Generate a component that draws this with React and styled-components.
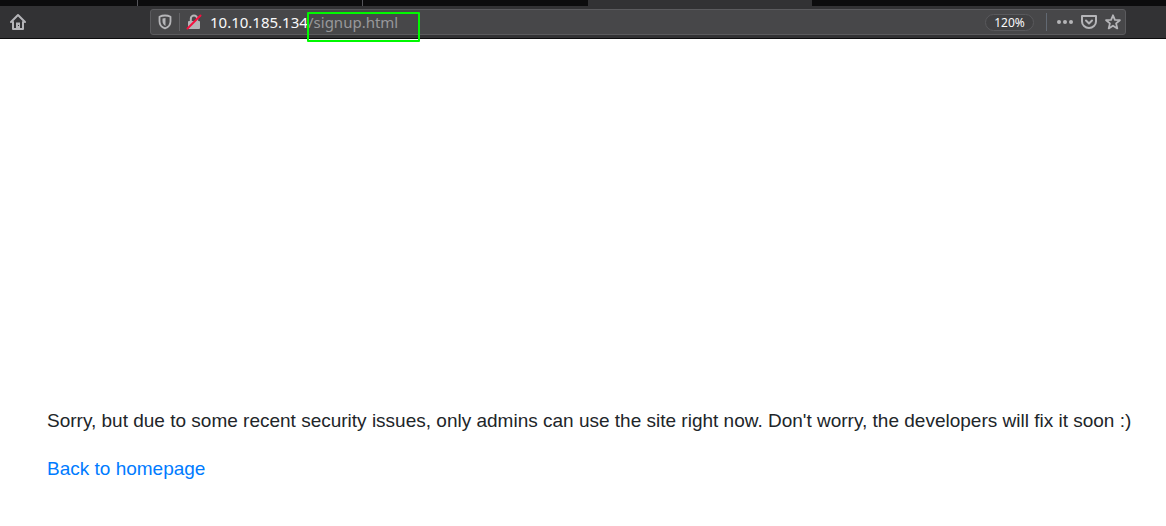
import React from "react";
import styled, { createGlobalStyle } from "styled-components";

const GlobalStyle = createGlobalStyle`
  * { box-sizing: border-box; }
  body { margin: 0; background: #fff; }
`;

const Chrome = styled.header`
  background: #323234;
  border-bottom: 1px solid #0c0c0d;
  font-family: "Noto Sans", "Open Sans", sans-serif;
`;

const TabStrip = styled.div`
  display: flex;
  height: 6px;
  background: #0c0c0d;
`;

const Tab = styled.div`
  flex: none;
  width: ${({ $cut }) => ($cut ? 138 : 225)}px;
  background: ${({ $active }) => ($active ? "#323234" : "#0c0c0d")};
  border-right: 1px solid ${({ $line }) => ($line ? "#55555a" : "#0c0c0d")};
`;

const Toolbar = styled.div`
  display: flex;
  align-items: center;
  height: 32px;
  padding: 0 40px 0 8px;
`;

const IconButton = styled.button`
  flex: none;
  display: flex;
  align-items: center;
  justify-content: center;
  width: 20px;
  height: 20px;
  padding: 0;
  border: 0;
  background: none;
  color: #b5b5b8;
`;

const AddressBar = styled.form`
  flex: 1;
  min-width: 0;
  display: flex;
  align-items: center;
  height: 26px;
  margin-left: 122px;
  padding: 0 2px 0 4px;
  background: #474749;
  border: 1px solid #5b5b5e;
  border-radius: 3px;
`;

const Divider = styled.span`
  flex: none;
  width: 1px;
  height: 18px;
  margin: 0 4px;
  background: ${({ $cool }) => ($cool ? "#626973" : "#626265")};
`;

const Host = styled.label`
  flex: none;
  width: 98px;
  margin-left: 6px;
  color: #f9f9fa;
  font-size: 15px;
  line-height: 20px;
  white-space: nowrap;
`;

const PathField = styled.div`
  position: relative;
  flex: none;
  width: 112px;
  height: 20px;
`;

const PathInput = styled.input`
  display: block;
  width: 100%;
  height: 20px;
  padding: 0;
  border: 0;
  outline: 0;
  background: none;
  color: #98989b;
  font-family: inherit;
  font-size: 15px;
  line-height: 20px;
`;

const Highlight = styled.div`
  position: absolute;
  inset: 0 0 -10px -1px;
  border: 2px solid #00f800;
  border-radius: 1px;
  pointer-events: none;
`;

const Spacer = styled.span`
  flex: 1;
`;

const ZoomButton = styled.button`
  flex: none;
  width: 49px;
  height: 17px;
  padding: 0;
  margin-right: 8px;
  border: 1px solid #59595c;
  border-radius: 9px;
  background: #414143;
  color: #f9f9fa;
  font-family: inherit;
  font-size: 12px;
  line-height: 15px;
`;

const Actions = styled.div`
  flex: none;
  display: flex;
  gap: 4px;
  margin-left: 4px;
`;

const Content = styled.main`
  padding: 368px 20px 32px 47px;
  color: #212529;
  font-family: "Liberation Sans", Arial, sans-serif;
  font-size: 19px;
  line-height: 28px;
`;

const Message = styled.p`
  margin: 0 0 20px;
`;

const HomeLink = styled.a`
  color: #007bff;
  text-decoration: none;
`;

const HomeIcon = () => (
  <svg width="18" height="18" viewBox="0 0 18 18" fill="none" stroke="currentColor" strokeWidth="2" strokeLinejoin="round" strokeLinecap="round">
    <path d="M2 9 9 2l7 7" />
    <path d="M4 9v7h10V9" />
    <path d="M7 15V9.500h4V15z" fill="currentColor" stroke="none" />
    <path d="M9.500 12v1" stroke="#323234" strokeWidth="1" strokeLinecap="butt" />
  </svg>
);

const ShieldIcon = () => (
  <svg width="14" height="16" viewBox="0 0 14 16">
    <path d="M7 1.500C9 1.500 11 2 12.500 2.800v4.400c0 3.700-2 6-5.500 7.200-3.500-1.200-5.500-3.500-5.500-7.200V2.800C3 2 5 1.500 7 1.500z" fill="none" stroke="currentColor" strokeWidth="1.800" strokeLinejoin="round" />
    <path d="M7.500 4v8C5.300 10.800 4.500 9.200 4.500 7V4.600z" fill="currentColor" />
  </svg>
);

const InsecureIcon = () => (
  <svg width="16" height="16" viewBox="0 0 16 16">
    <path d="M4.800 8V4.700a3.200 3.200 0 0 1 6.400 0V8" fill="none" stroke="currentColor" strokeWidth="2" />
    <rect x="2" y="7" width="12" height="8" rx="1" fill="currentColor" />
    <path d="M1.500 14.500 14.500 1.500" stroke="#f5103f" strokeWidth="2" strokeLinecap="round" />
  </svg>
);

const DotsIcon = () => (
  <svg width="16" height="16" viewBox="0 0 16 16" fill="currentColor">
    <circle cx="2" cy="8" r="2" />
    <circle cx="8" cy="8" r="2" />
    <circle cx="14" cy="8" r="2" />
  </svg>
);

const PocketIcon = () => (
  <svg width="16" height="16" viewBox="0 0 16 16" fill="none" stroke="currentColor" strokeWidth="2" strokeLinejoin="round" strokeLinecap="round">
    <path d="M1 2h14v5.500a7 6.500 0 0 1-14 0z" />
    <path d="m5 6.500 3 3 3-3" />
  </svg>
);

const StarIcon = () => (
  <svg width="16" height="16" viewBox="0 0 16 16" fill="none" stroke="currentColor" strokeWidth="1.800" strokeLinejoin="round">
    <path d="m8 1.300 1.900 4.500 5 .4-3.800 3.200 1.200 5L8 11.700l-4.300 2.700 1.200-5L1.100 6.200l5-.4z" />
  </svg>
);

export default function App() {
  return (
    <>
      <GlobalStyle />
      <Chrome>
        <TabStrip>
          <Tab $cut $line />
          <Tab $line />
          <Tab />
          <Tab $active />
        </TabStrip>
        <Toolbar>
          <IconButton type="button" aria-label="Home"><HomeIcon /></IconButton>
          <AddressBar onSubmit={(event) => event.preventDefault()}>
            <IconButton type="button" aria-label="Tracking protection"><ShieldIcon /></IconButton>
            <Divider />
            <IconButton type="button" aria-label="Connection is not secure"><InsecureIcon /></IconButton>
            <Host htmlFor="path">10.10.185.134</Host>
            <PathField>
              <PathInput id="path" type="text" defaultValue="/signup.html" spellCheck={false} />
              <Highlight />
            </PathField>
            <Spacer />
            <ZoomButton type="button">120%</ZoomButton>
            <Divider $cool />
            <Actions>
              <IconButton type="button" aria-label="Page actions"><DotsIcon /></IconButton>
              <IconButton type="button" aria-label="Save to Pocket"><PocketIcon /></IconButton>
              <IconButton type="button" aria-label="Bookmark this page"><StarIcon /></IconButton>
            </Actions>
          </AddressBar>
        </Toolbar>
      </Chrome>
      <Content>
        <Message>
          Sorry, but due to some recent security issues, only admins can use the site right now. Don't worry, the developers will fix it soon :)
        </Message>
        <HomeLink href="/">Back to homepage</HomeLink>
      </Content>
    </>
  );
}
